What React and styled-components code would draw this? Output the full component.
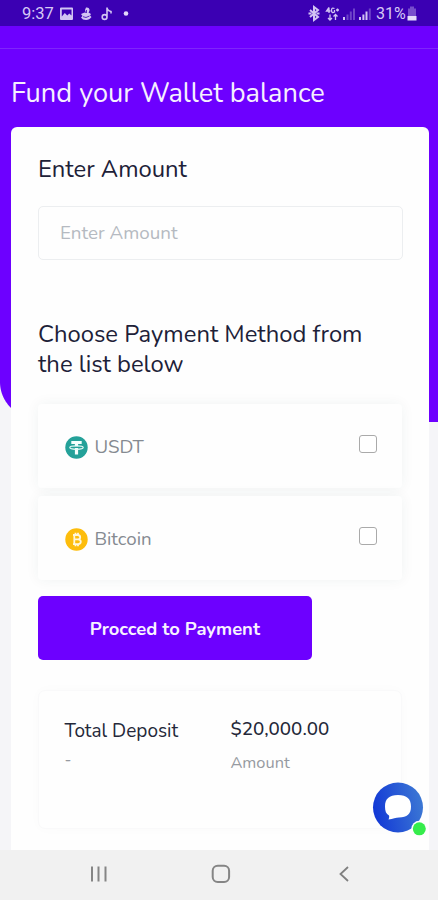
import React from "react";
import styled, { createGlobalStyle } from "styled-components";

const Global = createGlobalStyle`
  *, *::before, *::after { box-sizing: border-box; }
  html, body { margin: 0; padding: 0; }
  body { font-family: Nunito, Lato, "Noto Sans", sans-serif; background: #f5f5f8; }
  h1, h2, p { margin: 0; font-weight: 400; }
`;

const Screen = styled.div`
  width: 438px;
  height: 900px;
  display: flex;
  flex-direction: column;
  overflow: hidden;
`;

const StatusBar = styled.header`
  height: 26px;
  flex: none;
  display: flex;
  align-items: center;
  justify-content: space-between;
  padding: 1px 21px 0 22px;
  background: #3b00b3;
  color: #d6c8f5;
  font: 400 16.5px/24px Roboto, sans-serif;
`;

const StatusGroup = styled.div`
  display: flex;
  align-items: center;
  svg { display: block; flex: none; }
`;

const Clock = styled.span`
  width: 37px;
`;

const Battery = styled.span`
  width: 31px;
  font-size: 16px;
`;

const Page = styled.main`
  height: 824px;
  flex: none;
  overflow: hidden;
  padding: 0 9.5px 0 11.4px;
  background:
    radial-gradient(circle at 36px 0, #6d00ff 35.5px, transparent 36.5px) 0 356px / 36px 36px no-repeat,
    linear-gradient(#6d00ff, #6d00ff) 0 0 / 36px 356px no-repeat,
    linear-gradient(#6d00ff, #6d00ff) 36px 0 / 402px 396px no-repeat,
    #f5f5f8;
`;

const TopStrip = styled.div`
  height: 23px;
  margin: 0 -10px 0 -12px;
  border-bottom: 1px solid #7f25fb;
`;

const Title = styled.h1`
  height: 78px;
  padding-top: 29px;
  color: #f6efff;
  font-size: 27.2px;
  line-height: 32px;
  white-space: nowrap;
  margin-left: -0.4px;
`;

const Panel = styled.section`
  height: 760px;
  padding: 27px 26px 0 26.5px;
  border-radius: 6px 6px 0 0;
  background: #fefefe;
`;

const Heading = styled.h2`
  color: #1d2138;
  font-size: 23.8px;
  line-height: 30px;
  white-space: nowrap;
`;

const AmountInput = styled.input`
  display: block;
  width: 365px;
  height: 54px;
  margin: 22px 0 59px;
  padding: 0 21px;
  border: 1px solid #eceef0;
  border-radius: 5px;
  background: #fefefe;
  font-family: inherit;
  font-size: 18.8px;
  outline: none;
  &::placeholder { color: #b5bac1; opacity: 1; }
`;

const Methods = styled.div`
  width: 364px;
  display: flex;
  flex-direction: column;
  gap: 8px;
  margin-top: 25px;
`;

const Method = styled.label`
  height: 84px;
  display: flex;
  align-items: center;
  padding: 0 25px 0 27px;
  border-radius: 4px;
  background: #fefefe;
  box-shadow: 0 0 14px rgba(40, 60, 60, 0.06);
  color: #858a91;
  font-size: 18.7px;
  svg { margin: 3px 6.5px 0 0; flex: none; }
`;

const MethodName = styled.span`
  flex: 1;
  padding-top: 1px;
`;

const Check = styled.input`
  appearance: none;
  width: 18px;
  height: 18px;
  margin: -4px 0 0;
  border: 1.5px solid #aaa;
  border-radius: 3px;
  background: #fff;
`;

const PayButton = styled.button`
  display: block;
  width: 274px;
  height: 64px;
  margin-top: 16px;
  padding: 1px 0 0;
  border: 0;
  border-radius: 5px;
  background: #6d00ff;
  color: #f8f2ff;
  font-family: inherit;
  font-weight: 700;
  font-size: 18.4px;
`;

const Summary = styled.div`
  width: 364px;
  height: 139px;
  margin-top: 30px;
  padding: 26px 25.5px 0;
  display: grid;
  grid-template-columns: 166px 1fr;
  align-content: start;
  border: 1px solid #f9f9fa;
  border-radius: 7px;
  box-shadow: 0 0 12px rgba(40, 60, 60, 0.02);
`;

const SummaryCell = styled.div`
  padding-top: ${(p) => p.$drop || 0}px;
  white-space: nowrap;
`;

const SummaryMain = styled.p`
  color: #242839;
  font-size: ${(p) => p.$size}px;
  font-weight: ${(p) => p.$weight || 400};
  line-height: 24px;
`;

const SummarySub = styled.p`
  margin-top: ${(p) => p.$gap}px;
  color: #969aa1;
  font-size: 16.4px;
  line-height: 22px;
`;

const Chat = styled.button`
  position: absolute;
  left: 372px;
  top: 781px;
  width: 58px;
  height: 58px;
  padding: 0;
  border: 0;
  background: none;
  svg { display: block; }
`;

const NavBar = styled.nav`
  height: 50px;
  flex: none;
  display: grid;
  grid-template-columns: 198px 46px 1fr;
  align-items: center;
  background: #f1f1f1;
  padding-bottom: 2px;
  svg { display: block; }
`;

const NavItem = styled.div`
  padding-left: ${(p) => p.$inset}px;
`;

const STATUS_INK = "#d2c4f3";

const LeftIcons = () => (
  <svg width="76" height="20" viewBox="59 3.500 76 20" fill="none" stroke={STATUS_INK}>
    <path fillRule="evenodd" stroke="none" fill={STATUS_INK} d="M61 7h11q1 0 1 1v10.500q0 1-1 1H61q-1 0-1-1V8q0-1 1-1zM61.800 9v7l3-3.500 2.500 2.500 2-2 2.200 2V9z" />
    <path stroke="none" fill={STATUS_INK} d="M86 7q3-.500 3.500 2 .300 1.500-1 3l2.500 1.500-1 1.500 1.500 1.500q-2 3-5.500 3-3.500 0-5-2.500l1.500-1.500-1.500-2 3.500-1.500 1.500.500-1-3z" />
    <path d="M83 16.200l3 .800 3.500-1.500M86.500 9.500v3" stroke="#4a17b8" strokeWidth=".9" />
    <path d="M107 17V7q0 3 4 4v2M107 16.500a2.400 2.400 0 1 1-2.400-2.400q2.400 0 2.400 2.400z" strokeWidth="1.600" />
    <circle cx="126" cy="13" r="2.300" fill="#e3d9fa" stroke="none" />
  </svg>
);

const RightIcons = () => (
  <svg width="69" height="20" viewBox="307 3.500 69 20" fill="none" stroke={STATUS_INK}>
    <path d="M310 9.500l8 7-4 3V6.500l4 3-8 7" strokeWidth="2" />
    <path d="M308.500 13h3M316.500 13h3" strokeWidth="2.200" />
    <path d="M329 7l-2.500 3.500h4M329 7v5.500M334.500 8q-3-1.500-3 1.800t3 1.700v-2M336 9.500h3M337.500 8v3M330 14v5.500M328 17.500l2 2 2-2M335.500 19.500V14M333.500 16l2-2 2 2" strokeWidth="1.300" />
    <g strokeWidth="2">
      <path d="M344 16.500V19.500" />
      <path opacity=".35" d="M347.500 14V19.500M350.800 11V19.500M354 8V19.500" />
      <path d="M360 16.500V19.500M363.400 14V19.500M366.500 11V19.500" />
      <path opacity=".35" d="M369.800 8V19.500" />
    </g>
  </svg>
);

const BatteryIcon = () => (
  <svg width="10" height="20" viewBox="407 3.500 10 20">
    <path opacity=".4" fill={STATUS_INK} d="M410 6h4v2h2v8h-8V8h2z" />
    <path fill="#e5dcfa" d="M407.500 15.500h9V20h-9z" />
  </svg>
);

const Tether = () => (
  <svg width="23" height="23" viewBox="0 0 23 23">
    <circle cx="11.500" cy="11.500" r="11.200" fill="#24a199" />
    <path fill="#f5fffd" d="M6.300 5h10.400v3h-3.600v2.200h-3.200V8H6.300zM9.900 12h3.200v6.500H9.900z" />
    <ellipse cx="11.500" cy="11.600" rx="6.700" ry="1.700" fill="none" stroke="#e8faf7" strokeWidth="1.200" />
  </svg>
);

const Bitcoin = () => (
  <svg width="23" height="23" viewBox="0 0 23 23">
    <circle cx="11.500" cy="11.500" r="11.200" fill="#fdbd0c" />
    <path d="M8 7h4.800q2.400.200 2.400 2.200t-2.400 2.200H9.500h3.700q2.600.200 2.600 2.400t-2.600 2.400H8M9.300 7v9M10.500 4.700V7M13 4.700V7M10.500 16v2.300M13 16v2.300" fill="none" stroke="#fff7dc" strokeWidth="1.800" />
  </svg>
);

const ChatIcon = () => (
  <svg width="58" height="58" viewBox="372 781 58 58">
    <defs>
      <linearGradient id="chat" x1="0" y1=".6" x2="1" y2=".4">
        <stop offset="0" stopColor="#1238d6" />
        <stop offset="1" stopColor="#3c78d4" />
      </linearGradient>
    </defs>
    <circle cx="398" cy="807.500" r="25" fill="url(#chat)" />
    <path fill="#fff" d="M398 795c9 0 13 4 13 11.500S407 817.500 399 817.500c-3 0-6 1.500-10.500 2 .500-1.500 1-2.500.500-4-3-1.500-4-4.500-4-9 0-7.500 4-11.500 13-11.500z" />
    <circle cx="419.300" cy="828.800" r="8" fill="#fdfdfe" />
    <circle cx="419.300" cy="828.800" r="6.500" fill="#35ec4b" />
  </svg>
);

export default function App() {
  return (
    <Screen>
      <Global />
      <StatusBar>
        <StatusGroup>
          <Clock>9:37</Clock>
          <LeftIcons />
        </StatusGroup>
        <StatusGroup>
          <RightIcons />
          <Battery>31%</Battery>
          <BatteryIcon />
        </StatusGroup>
      </StatusBar>
      <Page>
        <TopStrip />
        <Title>Fund your Wallet balance</Title>
        <Panel>
          <Heading>Enter Amount</Heading>
          <AmountInput placeholder="Enter Amount" />
          <Heading as="p">
            Choose Payment Method from
            <br />
            the list below
          </Heading>
          <Methods>
            <Method>
              <Tether />
              <MethodName>USDT</MethodName>
              <Check type="checkbox" />
            </Method>
            <Method>
              <Bitcoin />
              <MethodName>Bitcoin</MethodName>
              <Check type="checkbox" />
            </Method>
          </Methods>
          <PayButton>Procced to Payment</PayButton>
          <Summary>
            <SummaryCell $drop={2}>
              <SummaryMain $size={19}>Total Deposit</SummaryMain>
              <SummarySub $gap={6}>-</SummarySub>
            </SummaryCell>
            <SummaryCell>
              <SummaryMain $size={18.8} $weight={500}>$20,000.00</SummaryMain>
              <SummarySub $gap={11}>Amount</SummarySub>
            </SummaryCell>
          </Summary>
        </Panel>
      </Page>
      <NavBar>
        <NavItem $inset={90}>
          <svg width="18" height="18" stroke="#858585" strokeWidth="2">
            <path d="M2 1.500v15M8.500 1.500v15M15.500 1.500v15" />
          </svg>
        </NavItem>
        <NavItem $inset={13}>
          <svg width="20" height="20" fill="none" stroke="#858585" strokeWidth="2">
            <rect x="1.700" y="1.700" width="16.400" height="16.400" rx="5" />
          </svg>
        </NavItem>
        <NavItem $inset={94}>
          <svg width="12" height="18" fill="none" stroke="#808080" strokeWidth="1.800">
            <path d="M10 2L2.500 9l7.500 7" />
          </svg>
        </NavItem>
      </NavBar>
      <Chat aria-label="Chat">
        <ChatIcon />
      </Chat>
    </Screen>
  );
}
